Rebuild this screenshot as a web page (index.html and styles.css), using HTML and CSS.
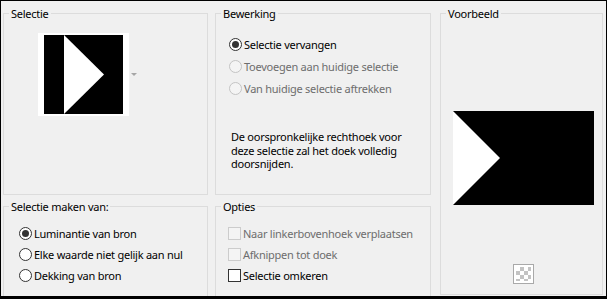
FILE: index.html
```html
<!DOCTYPE html>
<html lang="nl">
<head>
<meta charset="utf-8">
<title>Selectie</title>
<link rel="stylesheet" href="styles.css">
</head>
<body>
<div class="dialog">
  <fieldset class="group g-sel">
    <legend>Selectie</legend>
    <div class="sel-row">
      <div class="thumb">
        <svg width="91" height="83" viewBox="0 0 91 83">
          <rect x="0" y="0" width="91" height="83" fill="#fff"/>
          <rect x="6" y="2" width="79" height="79" fill="#000"/>
          <polygon points="26,2 26,81 66,41.5" fill="#fff"/>
        </svg>
      </div>
      <span class="drop-arrow"></span>
    </div>
  </fieldset>

  <fieldset class="group g-bew">
    <legend>Bewerking</legend>
    <div class="radios r-bew">
      <div class="opt"><span class="radio checked"></span><span>Selectie vervangen</span></div>
      <div class="opt disabled"><span class="radio"></span><span>Toevoegen aan huidige selectie</span></div>
      <div class="opt disabled"><span class="radio"></span><span>Van huidige selectie aftrekken</span></div>
    </div>
    <p class="desc">De oorspronkelijke rechthoek voor<br>deze selectie zal het doek volledig<br>doorsnijden.</p>
  </fieldset>

  <fieldset class="group g-voor">
    <legend>Voorbeeld</legend>
    <div class="preview">
      <svg width="141" height="94" viewBox="0 0 141 94">
        <rect x="0" y="0" width="141" height="94" fill="#000"/>
        <polygon points="0,0 0,94 47,47" fill="#fff"/>
      </svg>
      <span class="checker"><span class="checker-in"></span></span>
    </div>
  </fieldset>

  <fieldset class="group g-maken">
    <legend>Selectie maken van:</legend>
    <div class="radios r-maken">
      <div class="opt"><span class="radio checked"></span><span>Luminantie van bron</span></div>
      <div class="opt"><span class="radio"></span><span>Elke waarde niet gelijk aan nul</span></div>
      <div class="opt"><span class="radio"></span><span>Dekking van bron</span></div>
    </div>
  </fieldset>

  <fieldset class="group g-opt">
    <legend>Opties</legend>
    <div class="radios r-opt">
      <div class="opt disabled"><span class="check"></span><span>Naar linkerbovenhoek verplaatsen</span></div>
      <div class="opt disabled"><span class="check"></span><span>Afknippen tot doek</span></div>
      <div class="opt"><span class="check"></span><span>Selectie omkeren</span></div>
    </div>
  </fieldset>
</div>
</body>
</html>
```

FILE: styles.css
```css
html, body {
  margin: 0;
  padding: 0;
  background: #f0f0f0;
}

.dialog {
  width: 607px;
  height: 299px;
  box-sizing: border-box;
  border: 1px solid #000;
  border-bottom-width: 3px;
  background: #f0f0f0;
  padding: 5px 3px 0 2px;
  overflow: hidden;
  display: grid;
  grid-template-columns: 205px 7px 216px 9px 163px;
  grid-template-rows: 189px 4px 97px;
  font-family: "Noto Sans", "Open Sans", sans-serif;
  font-size: 11px;
  letter-spacing: -0.25px;
  color: #000;
}

.group {
  margin: 0;
  padding: 0;
  min-width: 0;
  border: 1px solid #dcdcdc;
  box-sizing: border-box;
}

.group legend {
  margin-left: 5px;
  padding: 0 2px;
  line-height: 15px;
  height: 15px;
}

.g-sel { grid-column: 1; grid-row: 1; }
.g-bew { grid-column: 3; grid-row: 1; }
.g-voor { grid-column: 5; grid-row: 1 / 4; height: 289px; }
.g-maken { grid-column: 1; grid-row: 3; height: 130px; }
.g-opt { grid-column: 3; grid-row: 3; height: 130px; }

/* Selectie */
.sel-row {
  display: flex;
  align-items: center;
  padding: 12px 0 0 34px;
}
.thumb svg { display: block; }
.drop-arrow {
  width: 0;
  height: 0;
  margin-left: 2px;
  border-left: 3px solid transparent;
  border-right: 3px solid transparent;
  border-top: 3px solid #a6a6a6;
}

/* radios & checks */
.radios { display: flex; flex-direction: column; }
.opt {
  display: flex;
  align-items: center;
  gap: 2px;
  white-space: nowrap;
}
.opt.disabled { color: #6d6d6d; }

.r-bew { padding: 12px 0 0 13px; }
.r-bew .opt { height: 22px; }
.r-maken { padding: 9px 0 0 15px; }
.r-maken .opt { height: 21px; }
.r-opt { padding: 9px 0 0 12px; }
.r-opt .opt { height: 21px; }

.radio {
  flex: none;
  width: 13px;
  height: 13px;
  box-sizing: border-box;
  border: 1px solid #333;
  border-radius: 50%;
  background: #fff;
  display: flex;
  align-items: center;
  justify-content: center;
}
.radio.checked::after {
  content: "";
  width: 7px;
  height: 7px;
  border-radius: 50%;
  background: #333;
}
.opt.disabled .radio {
  border-color: #c4c4c4;
  background: #f4f4f4;
}

.check {
  flex: none;
  width: 13px;
  height: 13px;
  box-sizing: border-box;
  border: 1px solid #333;
  background: #fff;
}
.opt.disabled .check {
  border-color: #cccccc;
  background: #f4f4f4;
}

.desc {
  margin: 31px 0 0 15px;
  line-height: 13.5px;
}

/* Voorbeeld */
.preview {
  display: flex;
  flex-direction: column;
  align-items: center;
  width: 141px;
  padding: 90px 0 0 12px;
}
.preview svg { display: block; }
.checker {
  margin-top: 59px;
  width: 21px;
  height: 20px;
  box-sizing: border-box;
  border: 1px solid #a9a9a9;
  padding: 2px;
  background: #fff;
  display: block;
}
.checker-in {
  display: block;
  width: 15px;
  height: 14px;
  background-color: #fff;
  background-image:
    linear-gradient(45deg, #c3c3c3 25%, transparent 25%, transparent 75%, #c3c3c3 75%),
    linear-gradient(45deg, #c3c3c3 25%, transparent 25%, transparent 75%, #c3c3c3 75%);
  background-size: 8px 8px;
  background-position: 0 0, 4px 4px;
}
```
